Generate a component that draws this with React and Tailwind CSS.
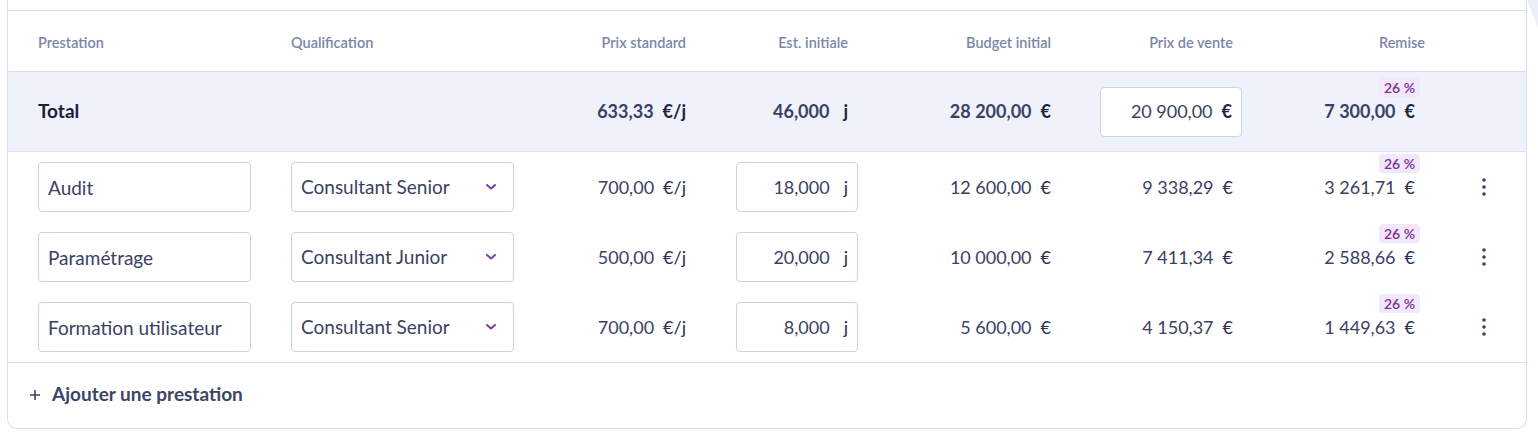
import { useState } from 'react'

const NNBSP = '\u202f'

const ROWS = [
  { id: 1, name: 'Audit', qualification: 'Consultant Senior', rate: '700,00', days: '18,000', budget: `12${NNBSP}600,00`, price: `9${NNBSP}338,29`, discount: `3${NNBSP}261,71`, pct: '26' },
  { id: 2, name: 'Paramétrage', qualification: 'Consultant Junior', rate: '500,00', days: '20,000', budget: `10${NNBSP}000,00`, price: `7${NNBSP}411,34`, discount: `2${NNBSP}588,66`, pct: '26' },
  { id: 3, name: 'Formation utilisateur', qualification: 'Consultant Senior', rate: '700,00', days: '8,000', budget: `5${NNBSP}600,00`, price: `4${NNBSP}150,37`, discount: `1${NNBSP}449,63`, pct: '26' },
]

const GRID = 'grid grid-cols-[253px_239px_156px_172px_193px_191px_183px_1fr] items-center pl-[30px]'

function Chevron() {
  return (
    <svg width="12" height="8" viewBox="0 0 12 8" fill="none">
      <path d="M2 2l4 3.5L10 2" stroke="#7b3d9c" strokeWidth="2" strokeLinecap="round" strokeLinejoin="round" />
    </svg>
  )
}

function Kebab() {
  return (
    <svg width="6" height="20" viewBox="0 0 6 20">
      <circle cx="3" cy="3" r="1.8" fill="#3a4163" />
      <circle cx="3" cy="10" r="1.8" fill="#3a4163" />
      <circle cx="3" cy="17" r="1.8" fill="#3a4163" />
    </svg>
  )
}

function Badge({ pct }) {
  return (
    <span className="absolute bottom-full right-[-5px] mb-px rounded-[4px] bg-[#f2e7fb] px-[5px] text-[14px] font-semibold leading-[19px] text-[#7a2e90] whitespace-nowrap">
      {pct}{NNBSP}%
    </span>
  )
}

function Money({ value, unit = '€', strong = false }) {
  return (
    <span className={`whitespace-nowrap text-[18px] ${strong ? 'font-bold text-[#3a4163]' : 'text-[#3a4163]'}`}>
      {value}
      <span className={`ml-[9px] ${strong ? 'text-[#1f2440]' : 'text-[#2c3150]'}`}>{unit}</span>
    </span>
  )
}

function Row({ row }) {
  const [name, setName] = useState(row.name)
  const [days, setDays] = useState(row.days)

  return (
    <div className={`${GRID} h-[70px]`}>
      <div>
        <input
          value={name}
          onChange={e => setName(e.target.value)}
          className="h-[50px] w-[213px] rounded-[4px] border border-[#cdd2e9] bg-white px-[9px] text-[19px] text-[#3a4163] outline-none"
        />
      </div>
      <div>
        <button className="flex h-[50px] w-[223px] items-center justify-between rounded-[4px] border border-[#cdd2e9] bg-white pl-[9px] pr-[16px] text-[19px] text-[#3a4163]">
          <span>{row.qualification}</span>
          <Chevron />
        </button>
      </div>
      <div className="text-right">
        <Money value={row.rate} unit="€/j" />
      </div>
      <div className="flex justify-end">
        <label className="flex h-[50px] w-[122px] items-center justify-end rounded-[4px] border border-[#cdd2e9] bg-white pr-[9px] text-[18px]">
          <input
            value={days}
            onChange={e => setDays(e.target.value)}
            className="w-[80px] bg-transparent text-right text-[#3a4163] outline-none"
          />
          <span className="ml-[14px] text-[#2c3150]">j</span>
        </label>
      </div>
      <div className="text-right">
        <Money value={row.budget} />
      </div>
      <div className="pr-[9px] text-right">
        <Money value={row.price} />
      </div>
      <div className="flex justify-end pr-[10px]">
        <span className="relative">
          <Badge pct={row.pct} />
          <Money value={row.discount} />
        </span>
      </div>
      <div className="flex pl-[54px]">
        <button className="flex h-[24px] w-[10px] items-center justify-center">
          <Kebab />
        </button>
      </div>
    </div>
  )
}

export default function App() {
  const [salePrice, setSalePrice] = useState(`20${NNBSP}900,00`)

  return (
    <div className="relative min-h-[439px] bg-white px-[7px] font-['Lato','Liberation_Sans',sans-serif]">
      {/* page background shape peeking at top right */}
      <div className="absolute right-0 top-0 h-[28px] w-[11px] bg-[#eceffa] [clip-path:polygon(0_0,100%_0,100%_100%)]" />

      <div className="w-[1520px] rounded-b-[10px] border-x border-b border-[#dcdfee] bg-white">
        <div className="h-[11px] border-b border-[#dcdfee]" />

        {/* header */}
        <div className={`${GRID} h-[61px] border-b border-[#dcdfee] pt-[3px] text-[14.5px] font-semibold text-[#7c86a8]`}>
          <div>Prestation</div>
          <div>Qualification</div>
          <div className="text-right">Prix standard</div>
          <div className="pr-[10px] text-right">Est. initiale</div>
          <div className="text-right">Budget initial</div>
          <div className="pr-[9px] text-right">Prix de vente</div>
          <div className="text-right">Remise</div>
          <div />
        </div>

        {/* total */}
        <div className={`${GRID} h-[80px] border-b border-[#dcdfee] bg-[#eff2fb] text-[18px] font-bold`}>
          <div className="text-[19px] text-[#1a1f38]">Total</div>
          <div />
          <div className="text-right">
            <Money value="633,33" unit="€/j" strong />
          </div>
          <div className="pr-[10px] text-right">
            <span className="text-[#3a4163]">46,000</span>
            <span className="ml-[14px] text-[#1f2440]">j</span>
          </div>
          <div className="text-right">
            <Money value={`28${NNBSP}200,00`} strong />
          </div>
          <div className="flex justify-end">
            <label className="flex h-[50px] w-[142px] items-center justify-end rounded-[4px] border border-[#cdd2e9] bg-white pr-[9px]">
              <input
                value={salePrice}
                onChange={e => setSalePrice(e.target.value)}
                className="w-[110px] bg-transparent text-right font-normal text-[#3a4163] outline-none"
              />
              <span className="ml-[9px] text-[#1f2440]">€</span>
            </label>
          </div>
          <div className="flex justify-end pr-[10px]">
            <span className="relative">
              <Badge pct="26" />
              <Money value={`7${NNBSP}300,00`} strong />
            </span>
          </div>
          <div />
        </div>

        {/* lines */}
        <div className="border-b border-[#dcdfee]">
          {ROWS.map(row => (
            <Row key={row.id} row={row} />
          ))}
        </div>

        {/* footer */}
        <div className="flex h-[65px] items-center pb-[2px] pl-[21px]">
          <button className="flex items-center gap-[11px] text-[19px] font-bold text-[#3d4466]">
            <svg width="12" height="12" viewBox="0 0 12 12">
              <path d="M6 1v10M1 6h10" stroke="#3d4466" strokeWidth="1.6" />
            </svg>
            Ajouter une prestation
          </button>
        </div>
      </div>
    </div>
  )
}
